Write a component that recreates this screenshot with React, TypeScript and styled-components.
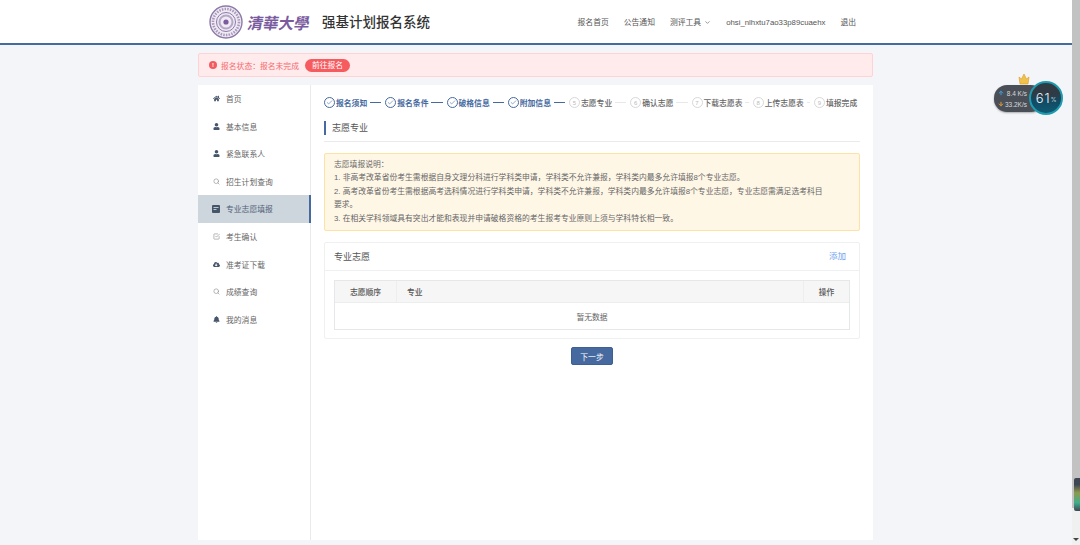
import { ReactNode } from 'react'
import styled, { createGlobalStyle } from 'styled-components'
import { FaBell, FaCloudDownloadAlt, FaHome, FaUser } from 'react-icons/fa'
import { FiArrowDown, FiArrowUp, FiCheck, FiCheckSquare, FiChevronDown, FiSearch } from 'react-icons/fi'

const GlobalStyle = createGlobalStyle`
  html, body {
    margin: 0;
    height: 100%;
    overflow: hidden;
  }
  body {
    background: #f4f5f8;
    color: #555;
    font-family: "Liberation Sans", "Noto Sans CJK SC", sans-serif;
    font-size: 7.8px;
  }
`

const Page = styled.div`
  width: 1080px;
  height: 545px;
  box-sizing: border-box;
  padding-right: 9px;
  display: flex;
  flex-direction: column;
  position: relative;
  overflow: hidden;
`

const Header = styled.header`
  height: 43px;
  flex: none;
  background: #fff;
  border-bottom: 2px solid #466a9f;
  margin-right: -9px;
  padding-right: 9px;
`

const HeaderInner = styled.div`
  width: 675px;
  height: 43px;
  margin: 0 auto;
  padding-left: 11px;
  padding-right: 17px;
  box-sizing: border-box;
  display: flex;
  align-items: center;
  justify-content: space-between;
`

const Brand = styled.div`
  display: flex;
  align-items: center;
`

const BrandName = styled.span`
  width: 66px;
  margin-left: 5px;
  color: #7a5c9e;
  font-family: "Noto Sans CJK TC", serif;
  font-size: 15.5px;
  font-weight: 700;
  line-height: 20px;
  white-space: nowrap;
  transform: skewX(-10deg);
`

const SystemTitle = styled.h1`
  margin: 3px 0 0 8px;
  color: #333;
  font-size: 13.5px;
  font-weight: 500;
  line-height: 18px;
`

const Nav = styled.nav`
  display: flex;
  align-items: center;
  gap: 15px;
  margin-top: 2px;
  color: #555;
  line-height: 12px;
`

const NavItem = styled.span`
  display: flex;
  align-items: center;
  gap: 3px;
  white-space: nowrap;
`

const Alert = styled.div`
  width: 675px;
  height: 24px;
  flex: none;
  box-sizing: border-box;
  margin: 8px auto 0;
  padding-left: 10px;
  display: flex;
  align-items: center;
  background: #ffebec;
  border: 1px solid #ffd2d3;
  border-radius: 2px;
  color: #f46a6f;
`

const AlertDot = styled.span`
  width: 8px;
  height: 8px;
  margin-right: 4px;
  border-radius: 50%;
  background: #f25a5f;
  color: #fff;
  font-size: 6px;
  font-weight: 700;
  line-height: 8px;
  text-align: center;
`

const AlertAction = styled.span`
  width: 45px;
  height: 13px;
  margin-left: 6px;
  border-radius: 7px;
  background: #f65b5f;
  color: #fff;
  line-height: 13px;
  text-align: center;
`

const Body = styled.div`
  width: 675px;
  flex: 1;
  margin: 8px auto 5px;
  display: flex;
  background: #fff;
`

const Sidebar = styled.aside`
  width: 113px;
  flex: none;
  box-sizing: border-box;
  border-right: 1px solid #e8eaec;
`

const MenuItem = styled.div<{ $active?: boolean }>`
  height: 27.55px;
  box-sizing: border-box;
  padding-left: 14px;
  display: flex;
  align-items: center;
  gap: 6px;
  color: ${p => (p.$active ? '#4d5f77' : '#666')};
  background: ${p => (p.$active ? '#cdd5dd' : 'transparent')};
  border-right: 2px solid ${p => (p.$active ? '#466a9f' : 'transparent')};
  margin-right: ${p => (p.$active ? '-1px' : '0')};
`

const MenuIcon = styled.span<{ $dark?: boolean }>`
  width: 8px;
  display: flex;
  justify-content: center;
  color: ${p => (p.$dark ? '#46566a' : '#888')};
  font-size: 7px;
`

const Main = styled.main`
  flex: 1;
  min-width: 0;
  padding: 11px 13px 0;
`

const Steps = styled.div`
  height: 13px;
  display: flex;
  align-items: center;
`

const StepSlot = styled.div<{ $last?: boolean }>`
  flex: ${p => (p.$last ? '1' : '0 0 61.25px')};
  display: flex;
  align-items: center;
`

const Step = styled.div<{ $done?: boolean }>`
  display: flex;
  align-items: center;
  gap: 1px;
  flex: none;
  color: ${p => (p.$done ? '#466a9f' : '#666')};
  font-weight: ${p => (p.$done ? 700 : 500)};
  white-space: nowrap;
`

const StepCircle = styled.span<{ $done?: boolean }>`
  width: 9px;
  height: 9px;
  border: 1px solid ${p => (p.$done ? '#466a9f' : '#d8d8d8')};
  border-radius: 50%;
  display: flex;
  align-items: center;
  justify-content: center;
  color: ${p => (p.$done ? '#466a9f' : '#bbb')};
  font-size: ${p => (p.$done ? 7 : 6)}px;
  font-weight: 400;
`

const StepLine = styled.span<{ $done?: boolean }>`
  flex: 1;
  height: 1px;
  margin: 0 4px 0 3px;
  background: ${p => (p.$done ? '#466a9f' : '#e8e8e8')};
`

const SectionTitle = styled.div`
  margin-top: 12px;
  padding-bottom: 6px;
  border-bottom: 1px solid #e8eaec;
`

const SectionLabel = styled.div`
  height: 14px;
  padding-left: 6px;
  border-left: 2px solid #466a9f;
  color: #555;
  font-size: 9px;
  line-height: 14px;
`

const Notice = styled.div`
  margin-top: 11px;
  padding: 4px 9px 5px;
  background: #fff7e6;
  border: 1px solid #fde2a6;
  border-radius: 2px;
  color: #666;
  line-height: 13.4px;
`

const NoticeLine = styled.div`
  white-space: nowrap;
`

const Card = styled.section`
  margin-top: 11px;
  border: 1px solid #eff0f2;
  border-radius: 2px;
`

const CardHeader = styled.div`
  height: 27px;
  padding: 0 13px 0 9px;
  display: flex;
  align-items: center;
  justify-content: space-between;
  border-bottom: 1px solid #eff0f2;
  color: #555;
  font-size: 9px;
`

const AddLink = styled.span`
  margin-bottom: 3px;
  color: #6fa3f0;
  font-size: 8.5px;
`

const CardBody = styled.div`
  padding: 9px 9px 8px;
`

const Table = styled.div`
  border: 1px solid #e6e7e9;
`

const TableHead = styled.div`
  height: 22px;
  box-sizing: border-box;
  display: grid;
  grid-template-columns: 62px 1fr 45px;
  background: #f6f6f6;
  border-bottom: 1px solid #eceded;
  color: #555;
`

const HeadCell = styled.div<{ $center?: boolean; $right?: boolean }>`
  display: flex;
  align-items: center;
  justify-content: ${p => (p.$center ? 'center' : 'flex-start')};
  padding-left: ${p => (p.$center ? 0 : 10)}px;
  border-right: ${p => (p.$right ? 0 : 1)}px solid #eeeeee;
  font-weight: 500;
`

const EmptyRow = styled.div`
  height: 26px;
  display: flex;
  align-items: center;
  justify-content: center;
  color: #666;
`

const Footer = styled.div`
  margin-top: 8px;
  display: flex;
  justify-content: center;
`

const NextButton = styled.button`
  width: 42px;
  height: 18px;
  padding: 0;
  background: #466a9f;
  border: 1px solid #3d6092;
  border-radius: 2px;
  color: #fff;
  font: inherit;
`

const SpeedWidget = styled.div`
  position: absolute;
  left: 994px;
  top: 81px;
  width: 69px;
  height: 34px;
`

const SpeedPill = styled.div`
  position: absolute;
  left: 0;
  top: 4px;
  width: 50px;
  height: 27px;
  box-sizing: border-box;
  padding: 0 17px 0 4px;
  border-radius: 13px;
  background: #4a4f57;
  color: #d5d8dc;
  font-size: 6.5px;
  line-height: 11px;
  display: flex;
  flex-direction: column;
  justify-content: center;
  box-shadow: 0 1px 2px rgba(0, 0, 0, 0.3);
`

const SpeedRow = styled.div<{ $down?: boolean }>`
  display: flex;
  align-items: center;
  justify-content: space-between;
  white-space: nowrap;

  svg {
    color: ${p => (p.$down ? '#e59a3a' : '#3f9fd8')};
    stroke-width: 4;
  }
`

const Gauge = styled.div`
  position: absolute;
  left: 35px;
  top: 0;
  width: 34px;
  height: 34px;
  box-sizing: border-box;
  border-radius: 50%;
  border: 2px solid #1f9bb0;
  background: linear-gradient(#2f3a44 35%, #124a63 60%, #0f5a73);
  color: #f2f6f8;
  font-family: Inter, sans-serif;
  font-size: 13px;
  font-weight: 300;
  letter-spacing: 1px;
  display: flex;
  align-items: center;
  justify-content: center;
`

const GaugeUnit = styled.span`
  margin-top: 3px;
  font-size: 6px;
  letter-spacing: 0;
`

const Crown = styled.svg`
  position: absolute;
  left: 24px;
  top: -8px;
`

const ScrollTrack = styled.div`
  position: absolute;
  right: 0;
  top: 0;
  width: 8px;
  height: 545px;
  background: #f0f0f0;

  &::after {
    content: '';
    position: absolute;
    left: 1px;
    bottom: 4px;
    border: 3px solid transparent;
    border-top-color: #444;
    border-bottom: 0;
  }
`

const ScrollThumb = styled.div`
  height: 508px;
  background: #c2c2c2;
`

const SideTab = styled.div`
  position: absolute;
  right: 0;
  top: 478px;
  width: 6px;
  height: 33px;
  border-radius: 2px 0 0 2px;
  background: linear-gradient(#3d4653 20%, #8e9a4c 45%, #3fae8c 75%, #3d4653);
`

function FormIcon() {
  return (
    <svg width="8" height="8" viewBox="0 0 8 8">
      <rect width="8" height="8" rx="1" fill="#46566a" />
      <path d="M1.5 2.5h5M1.5 4.5h3" stroke="#cdd5dd" strokeWidth="0.9" />
    </svg>
  )
}

const menu: { label: string; icon: ReactNode; dark?: boolean; active?: boolean }[] = [
  { label: '首页', icon: <FaHome />, dark: true },
  { label: '基本信息', icon: <FaUser />, dark: true },
  { label: '紧急联系人', icon: <FaUser />, dark: true },
  { label: '招生计划查询', icon: <FiSearch /> },
  { label: '专业志愿填报', icon: <FormIcon />, dark: true, active: true },
  { label: '考生确认', icon: <FiCheckSquare /> },
  { label: '准考证下载', icon: <FaCloudDownloadAlt />, dark: true },
  { label: '成绩查询', icon: <FiSearch /> },
  { label: '我的消息', icon: <FaBell />, dark: true },
]

const steps = [
  '报名须知',
  '报名条件',
  '破格信息',
  '附加信息',
  '志愿专业',
  '确认志愿',
  '下载志愿表',
  '上传志愿表',
  '填报完成',
]

function Seal() {
  return (
    <svg width="34" height="34" viewBox="0 0 34 34" fill="none" stroke="#8d7aa8">
      <circle cx="17" cy="17" r="16" strokeWidth="1.4" fill="#efeaf3" />
      <circle cx="17" cy="17" r="13" strokeWidth="2.6" strokeDasharray="1.5 1.2" stroke="#a899bb" />
      <circle cx="17" cy="17" r="9.5" strokeWidth="1" />
      <circle cx="17" cy="17" r="6.5" strokeWidth="2" stroke="#b5a8c6" />
      <circle cx="17" cy="17" r="2.6" fill="#7a5c9e" stroke="none" />
    </svg>
  )
}

function App() {
  return (
    <Page>
      <GlobalStyle />
      <Header>
        <HeaderInner>
          <Brand>
            <Seal />
            <BrandName>清華大學</BrandName>
            <SystemTitle>强基计划报名系统</SystemTitle>
          </Brand>
          <Nav>
            <NavItem>报名首页</NavItem>
            <NavItem>公告通知</NavItem>
            <NavItem>
              测评工具 <FiChevronDown size={7} />
            </NavItem>
            <NavItem>ohsi_nlhxtu7ao33p89cuaehx</NavItem>
            <NavItem>退出</NavItem>
          </Nav>
        </HeaderInner>
      </Header>

      <Alert>
        <AlertDot>!</AlertDot>
        报名状态：报名未完成
        <AlertAction>前往报名</AlertAction>
      </Alert>

      <Body>
        <Sidebar>
          {menu.map(item => (
            <MenuItem key={item.label} $active={item.active}>
              <MenuIcon $dark={item.dark}>{item.icon}</MenuIcon>
              {item.label}
            </MenuItem>
          ))}
        </Sidebar>

        <Main>
          <Steps>
            {steps.map((label, i) => {
              const done = i < 4
              const last = i === steps.length - 1
              return (
                <StepSlot key={label} $last={last}>
                  <Step $done={done}>
                    <StepCircle $done={done}>{done ? <FiCheck /> : i + 1}</StepCircle>
                    {label}
                  </Step>
                  {!last && <StepLine $done={done} />}
                </StepSlot>
              )
            })}
          </Steps>

          <SectionTitle>
            <SectionLabel>志愿专业</SectionLabel>
          </SectionTitle>

          <Notice>
            <NoticeLine>志愿填报说明：</NoticeLine>
            <NoticeLine>1. 非高考改革省份考生需根据自身文理分科进行学科类申请，学科类不允许兼报，学科类内最多允许填报8个专业志愿。</NoticeLine>
            <NoticeLine>2. 高考改革省份考生需根据高考选科情况进行学科类申请，学科类不允许兼报，学科类内最多允许填报8个专业志愿，专业志愿需满足选考科目</NoticeLine>
            <NoticeLine>要求。</NoticeLine>
            <NoticeLine>3. 在相关学科领域具有突出才能和表现并申请破格资格的考生报考专业原则上须与学科特长相一致。</NoticeLine>
          </Notice>

          <Card>
            <CardHeader>
              专业志愿
              <AddLink>添加</AddLink>
            </CardHeader>
            <CardBody>
              <Table>
                <TableHead>
                  <HeadCell $center>志愿顺序</HeadCell>
                  <HeadCell>专业</HeadCell>
                  <HeadCell $center $right>操作</HeadCell>
                </TableHead>
                <EmptyRow>暂无数据</EmptyRow>
              </Table>
            </CardBody>
          </Card>

          <Footer>
            <NextButton>下一步</NextButton>
          </Footer>
        </Main>
      </Body>

      <SpeedWidget>
        <SpeedPill>
          <SpeedRow>
            <FiArrowUp size={6} />
            8.4 K/s
          </SpeedRow>
          <SpeedRow $down>
            <FiArrowDown size={6} />
            33.2K/s
          </SpeedRow>
        </SpeedPill>
        <Gauge>
          61<GaugeUnit>%</GaugeUnit>
        </Gauge>
        <Crown width="12" height="12" viewBox="0 0 12 12">
          <path d="M1 4l2.5 2L6 1l2.5 5L11 4l-1 7H2z" fill="#f0c14b" stroke="#d99a2b" strokeWidth="0.6" />
        </Crown>
      </SpeedWidget>

      <ScrollTrack>
        <ScrollThumb />
      </ScrollTrack>
      <SideTab />
    </Page>
  )
}

export default App
